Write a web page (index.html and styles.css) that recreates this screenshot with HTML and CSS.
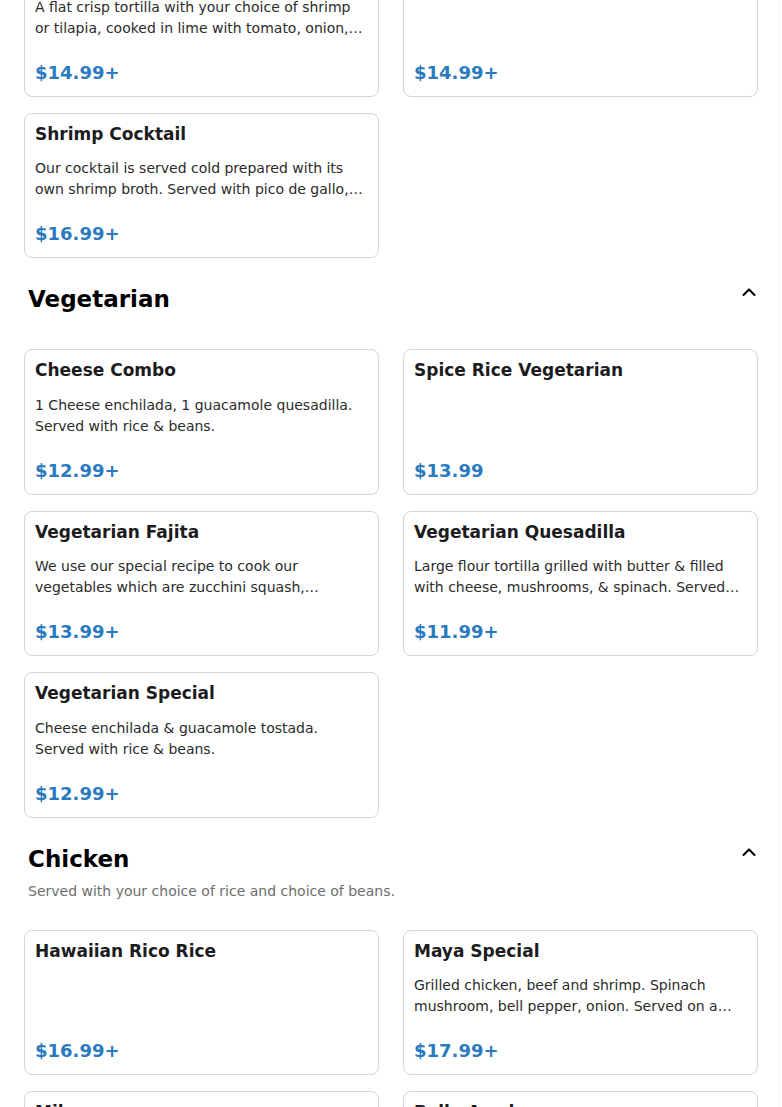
FILE: index.html
```html
<!DOCTYPE html>
<html lang="en">
<head>
  <meta charset="UTF-8">
  <meta name="viewport" content="width=device-width, initial-scale=1">
  <title>Menu</title>
  <link rel="stylesheet" href="styles.css">
</head>
<body>
  <div class="page">

    <!-- ---------- Seafood (suite) ---------- -->
    <div class="grid menu-top">
      <div class="card">
        <h3 class="card-title">Tostada de Ceviche</h3>
        <p class="card-desc">A flat crisp tortilla with your choice of shrimp or tilapia, cooked in lime with tomato, onion, cilantro and avocado.</p>
        <div class="card-price">$14.99+</div>
      </div>
      <div class="card">
        <h3 class="card-title">Shrimp Tacos</h3>
        <p class="card-desc"></p>
        <div class="card-price">$14.99+</div>
      </div>
      <div class="card">
        <h3 class="card-title">Shrimp Cocktail</h3>
        <p class="card-desc">Our cocktail is served cold prepared with its own shrimp broth. Served with pico de gallo, avocado and crackers.</p>
        <div class="card-price">$16.99+</div>
      </div>
    </div>

    <!-- ---------- Vegetarian ---------- -->
    <div class="section-head section-head--plain">
      <div>
        <h2 class="section-title">Vegetarian</h2>
      </div>
      <svg class="chevron" width="20" height="20" viewBox="0 0 20 20" fill="none" stroke="#000" stroke-width="2" stroke-linecap="round" stroke-linejoin="round"><polyline points="4.5 13 10 7.5 15.5 13"/></svg>
    </div>

    <div class="grid">
      <div class="card">
        <h3 class="card-title">Cheese Combo</h3>
        <p class="card-desc">1 Cheese enchilada, 1 guacamole quesadilla. Served with rice &amp; beans.</p>
        <div class="card-price">$12.99+</div>
      </div>
      <div class="card">
        <h3 class="card-title">Spice Rice Vegetarian</h3>
        <p class="card-desc"></p>
        <div class="card-price">$13.99</div>
      </div>
      <div class="card">
        <h3 class="card-title">Vegetarian Fajita</h3>
        <p class="card-desc">We use our special recipe to cook our vegetables which are zucchini squash, mushrooms, bell pepper and onion.</p>
        <div class="card-price">$13.99+</div>
      </div>
      <div class="card">
        <h3 class="card-title">Vegetarian Quesadilla</h3>
        <p class="card-desc">Large flour tortilla grilled with butter &amp; filled with cheese, mushrooms, &amp; spinach. Served with rice &amp; beans.</p>
        <div class="card-price">$11.99+</div>
      </div>
      <div class="card">
        <h3 class="card-title">Vegetarian Special</h3>
        <p class="card-desc">Cheese enchilada &amp; guacamole tostada. Served with rice &amp; beans.</p>
        <div class="card-price">$12.99+</div>
      </div>
    </div>

    <!-- ---------- Chicken ---------- -->
    <div class="section-head">
      <div>
        <h2 class="section-title">Chicken</h2>
        <p class="section-sub">Served with your choice of rice and choice of beans.</p>
      </div>
      <svg class="chevron" width="20" height="20" viewBox="0 0 20 20" fill="none" stroke="#000" stroke-width="2" stroke-linecap="round" stroke-linejoin="round"><polyline points="4.5 13 10 7.5 15.5 13"/></svg>
    </div>

    <div class="grid">
      <div class="card">
        <h3 class="card-title">Hawaiian Rico Rice</h3>
        <p class="card-desc"></p>
        <div class="card-price">$16.99+</div>
      </div>
      <div class="card">
        <h3 class="card-title">Maya Special</h3>
        <p class="card-desc">Grilled chicken, beef and shrimp. Spinach mushroom, bell pepper, onion. Served on a sizzling platter.</p>
        <div class="card-price">$17.99+</div>
      </div>
      <div class="card">
        <h3 class="card-title">Milanesa</h3>
        <p class="card-desc">Breaded chicken breast served with rice, beans and salad.</p>
        <div class="card-price">$15.99+</div>
      </div>
      <div class="card">
        <h3 class="card-title">Pollo Asado</h3>
        <p class="card-desc">Grilled chicken served with rice, beans and tortillas.</p>
        <div class="card-price">$15.99+</div>
      </div>
    </div>

  </div>
</body>
</html>
```

FILE: styles.css
```css
/* ---------- Base ---------- */
*{box-sizing:border-box;margin:0;padding:0;}

body{
  font-family:"DejaVu Sans","Liberation Sans",sans-serif;
  background:#fff;
  color:#1d1d1f;
  overflow:hidden;
}

.page{
  margin-right:2px;
  padding:0 21px 40px 24px;
  border-right:1px solid #f3f3f3;
}

/* ---------- En-têtes de section ---------- */
.section-head{
  display:flex;
  justify-content:space-between;
  align-items:flex-start;
  padding:25px 0 0 4px;
  margin-bottom:28px;
}
.section-head--plain{margin-bottom:34px;}

.section-title{
  font-size:23px;
  line-height:32px;
  font-weight:bold;
  color:#000;
}

.section-sub{
  margin-top:6px;
  font-size:14px;
  line-height:21px;
  color:#6e6e6e;
}

.chevron{display:block;margin-top:-1px;margin-right:-1px;}

/* ---------- Grille de plats ---------- */
.grid{
  display:grid;
  grid-template-columns:1fr 1fr;
  gap:16px 24px;
}
.menu-top{margin-top:-49px;}

.card{
  display:flex;
  flex-direction:column;
  border:1px solid #d5d5d5;
  border-radius:8px;
  padding:8px 10px 10px;
  background:#fff;
}

.card-title{
  font-size:17px;
  line-height:1.5;
  font-weight:bold;
  color:#1c1c1e;
}

.card-desc{
  margin-top:11px;
  height:42px;
  font-size:14px;
  line-height:21px;
  color:#2b2b2b;
  overflow:hidden;
  display:-webkit-box;
  -webkit-line-clamp:2;
  -webkit-box-orient:vertical;
}

.card-price{
  margin-top:20px;
  font-size:18px;
  line-height:27px;
  font-weight:bold;
  color:#2a7abf;
}
```
